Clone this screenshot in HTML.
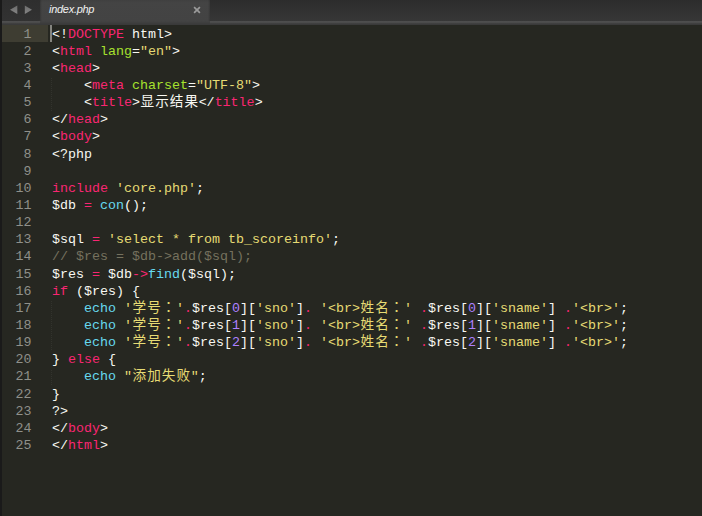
<!DOCTYPE html>
<html lang="zh">
<head>
<meta charset="UTF-8">
<title>index.php</title>
<style>
html,body{margin:0;padding:0;}
body{width:702px;height:516px;overflow:hidden;background:#262721;position:relative;font-family:"Liberation Mono","Noto Sans CJK SC",monospace;}
#edge{position:absolute;left:0;top:0;width:1.7px;height:516px;background:#1a1a1a;z-index:5;}
#tabbar{position:absolute;left:0;top:0;width:702px;height:24px;background:linear-gradient(#2b2b2b,#343434 20px,#343434);}
#strip{position:absolute;left:0;top:20.6px;width:702px;height:4.2px;background:linear-gradient(#4f4f4f,#4b4b4b 1.5px,#414141 2.1px,#3d3d3d 3.2px,#333 4.2px);}
#arrows{position:absolute;left:1.7px;top:0;width:37.9px;height:20.6px;background:linear-gradient(#2e2e2e,#323232);border-bottom-right-radius:2.5px;}
#tab{position:absolute;left:39.6px;top:0;width:170.2px;height:24.3px;background:linear-gradient(#404040,#444 3px,#434343 21px,#3b3b3b);}
#tab:before,#tab:after{content:'';position:absolute;top:0;width:2px;height:21px;}
#tab:before{left:0;background:linear-gradient(90deg,rgba(0,0,0,.18),rgba(0,0,0,0));}
#tab:after{right:0;background:linear-gradient(270deg,rgba(0,0,0,.18),rgba(0,0,0,0));}
#rest{position:absolute;left:209.8px;top:0;width:492.2px;height:20.6px;background:linear-gradient(#2c2c2c,#373737);border-bottom-left-radius:2.5px;}
#label{position:absolute;left:49px;top:2px;font:italic 11px/14px "Liberation Sans",sans-serif;color:#f2f2f2;letter-spacing:-0.28px;white-space:nowrap;}
#close{position:absolute;left:191.3px;top:3.9px;}
#arr{position:absolute;left:0;top:0;}
.ln{position:absolute;left:0;width:702px;height:17.17px;line-height:17.17px;white-space:pre;font-size:13.333px;}
.no{position:absolute;left:1.6px;width:30px;text-align:right;color:#8f908a;}
.code{position:absolute;left:52px;}
.code i{font-style:normal;font-size:13.6px;display:inline-block;width:14.667px;line-height:0;vertical-align:baseline;text-align:center;}
.code i.f{font-family:"Liberation Mono","Noto Sans CJK TC","Noto Sans CJK JP",monospace;}
.w{color:#f8f8f2}.k{color:#f92672}.s{color:#e6db74}.g{color:#a6e22e}.b{color:#66d9ef}.p{color:#ae81ff}.c{color:#75715e}
.ig{position:absolute;left:51px;width:1px;background:repeating-linear-gradient(#32332d 0,#32332d 1px,transparent 1px,transparent 2px);}
#hl{position:absolute;left:2px;top:24.8px;width:45.5px;height:17.2px;background:#3e3d32;}
#cur{position:absolute;left:50.2px;top:24.8px;width:1.8px;height:17.2px;background:#85857f;}
</style>
</head>
<body>
<div id="tabbar"></div>
<div id="strip"></div>
<div id="rest"></div>
<div id="arrows"></div>
<div id="tab"></div>
<svg id="arr" width="40" height="21" viewBox="0 0 40 21"><defs><linearGradient id="ag" x1="0" y1="0" x2="0" y2="1"><stop offset="0" stop-color="#6c6c6c"/><stop offset="1" stop-color="#868686"/></linearGradient></defs><polygon points="10,9.7 17.3,5.5 17.3,14" fill="url(#ag)"/><polygon points="32,9.7 24.8,5.5 24.8,14" fill="url(#ag)"/></svg>
<div id="label">index.php</div>
<svg id="close" width="12" height="12" viewBox="0 0 12 12"><path d="M3.1 3.1 L8.9 8.9 M8.9 3.1 L3.1 8.9" stroke="#9a9a9a" stroke-width="1.7" fill="none"/></svg>
<div id="hl"></div>
<div id="cur"></div>
<div id="edge"></div>
<div class="ig" style="top:77.78px;height:32.82px"></div><div class="ig" style="top:300.86px;height:49.98px"></div><div class="ig" style="top:369.50px;height:15.66px"></div>
<div class="ln" style="top:26.00px"><span class="no">1</span><span class="code"><span class="w">&lt;!</span><span class="k">DOCTYPE</span><span class="w"> html&gt;</span></span></div>
<div class="ln" style="top:43.00px"><span class="no">2</span><span class="code"><span class="w">&lt;</span><span class="k">html</span><span class="w"> </span><span class="g">lang</span><span class="w">=</span><span class="s">"en"</span><span class="w">&gt;</span></span></div>
<div class="ln" style="top:60.00px"><span class="no">3</span><span class="code"><span class="w">&lt;</span><span class="k">head</span><span class="w">&gt;</span></span></div>
<div class="ln" style="top:77.00px"><span class="no">4</span><span class="code"><span class="w">    &lt;</span><span class="k">meta</span><span class="w"> </span><span class="g">charset</span><span class="w">=</span><span class="s">"UTF-8"</span><span class="w">&gt;</span></span></div>
<div class="ln" style="top:94.00px"><span class="no">5</span><span class="code"><span class="w">    &lt;</span><span class="k">title</span><span class="w">&gt;<i>显</i><i>示</i><i>结</i><i>果</i>&lt;/</span><span class="k">title</span><span class="w">&gt;</span></span></div>
<div class="ln" style="top:111.00px"><span class="no">6</span><span class="code"><span class="w">&lt;/</span><span class="k">head</span><span class="w">&gt;</span></span></div>
<div class="ln" style="top:128.00px"><span class="no">7</span><span class="code"><span class="w">&lt;</span><span class="k">body</span><span class="w">&gt;</span></span></div>
<div class="ln" style="top:146.00px"><span class="no">8</span><span class="code"><span class="w">&lt;?php</span></span></div>
<div class="ln" style="top:163.00px"><span class="no">9</span><span class="code"></span></div>
<div class="ln" style="top:180.00px"><span class="no">10</span><span class="code"><span class="k">include</span><span class="w"> </span><span class="s">'core.php'</span><span class="w">;</span></span></div>
<div class="ln" style="top:197.00px"><span class="no">11</span><span class="code"><span class="w">$db </span><span class="k">=</span><span class="w"> </span><span class="b">con</span><span class="w">();</span></span></div>
<div class="ln" style="top:214.00px"><span class="no">12</span><span class="code"></span></div>
<div class="ln" style="top:231.00px"><span class="no">13</span><span class="code"><span class="w">$sql </span><span class="k">=</span><span class="w"> </span><span class="s">'select * from tb_scoreinfo'</span><span class="w">;</span></span></div>
<div class="ln" style="top:248.00px"><span class="no">14</span><span class="code"><span class="c">// $res = $db-&gt;add($sql);</span></span></div>
<div class="ln" style="top:266.00px"><span class="no">15</span><span class="code"><span class="w">$res </span><span class="k">=</span><span class="w"> $db</span><span class="k">-&gt;</span><span class="b">find</span><span class="w">($sql);</span></span></div>
<div class="ln" style="top:283.00px"><span class="no">16</span><span class="code"><span class="k">if</span><span class="w"> ($res) {</span></span></div>
<div class="ln" style="top:300.00px"><span class="no">17</span><span class="code"><span class="w">    </span><span class="b">echo</span><span class="w"> </span><span class="s">'<i>学</i><i>号</i><i class="f">：</i>'</span><span class="k">.</span><span class="w">$res[</span><span class="p">0</span><span class="w">][</span><span class="s">'sno'</span><span class="w">]</span><span class="k">.</span><span class="w"> </span><span class="s">'&lt;br&gt;<i>姓</i><i>名</i><i class="f">：</i>'</span><span class="w"> </span><span class="k">.</span><span class="w">$res[</span><span class="p">0</span><span class="w">][</span><span class="s">'sname'</span><span class="w">]</span><span class="w"> </span><span class="k">.</span><span class="s">'&lt;br&gt;'</span><span class="w">;</span></span></div>
<div class="ln" style="top:317.00px"><span class="no">18</span><span class="code"><span class="w">    </span><span class="b">echo</span><span class="w"> </span><span class="s">'<i>学</i><i>号</i><i class="f">：</i>'</span><span class="k">.</span><span class="w">$res[</span><span class="p">1</span><span class="w">][</span><span class="s">'sno'</span><span class="w">]</span><span class="k">.</span><span class="w"> </span><span class="s">'&lt;br&gt;<i>姓</i><i>名</i><i class="f">：</i>'</span><span class="w"> </span><span class="k">.</span><span class="w">$res[</span><span class="p">1</span><span class="w">][</span><span class="s">'sname'</span><span class="w">]</span><span class="w"> </span><span class="k">.</span><span class="s">'&lt;br&gt;'</span><span class="w">;</span></span></div>
<div class="ln" style="top:334.00px"><span class="no">19</span><span class="code"><span class="w">    </span><span class="b">echo</span><span class="w"> </span><span class="s">'<i>学</i><i>号</i><i class="f">：</i>'</span><span class="k">.</span><span class="w">$res[</span><span class="p">2</span><span class="w">][</span><span class="s">'sno'</span><span class="w">]</span><span class="k">.</span><span class="w"> </span><span class="s">'&lt;br&gt;<i>姓</i><i>名</i><i class="f">：</i>'</span><span class="w"> </span><span class="k">.</span><span class="w">$res[</span><span class="p">2</span><span class="w">][</span><span class="s">'sname'</span><span class="w">]</span><span class="w"> </span><span class="k">.</span><span class="s">'&lt;br&gt;'</span><span class="w">;</span></span></div>
<div class="ln" style="top:351.00px"><span class="no">20</span><span class="code"><span class="w">} </span><span class="k">else</span><span class="w"> {</span></span></div>
<div class="ln" style="top:368.00px"><span class="no">21</span><span class="code"><span class="w">    </span><span class="b">echo</span><span class="w"> </span><span class="s">"<i>添</i><i>加</i><i>失</i><i>败</i>"</span><span class="w">;</span></span></div>
<div class="ln" style="top:386.00px"><span class="no">22</span><span class="code"><span class="w">}</span></span></div>
<div class="ln" style="top:403.00px"><span class="no">23</span><span class="code"><span class="w">?&gt;</span></span></div>
<div class="ln" style="top:420.00px"><span class="no">24</span><span class="code"><span class="w">&lt;/</span><span class="k">body</span><span class="w">&gt;</span></span></div>
<div class="ln" style="top:437.00px"><span class="no">25</span><span class="code"><span class="w">&lt;/</span><span class="k">html</span><span class="w">&gt;</span></span></div>
</body>
</html>
